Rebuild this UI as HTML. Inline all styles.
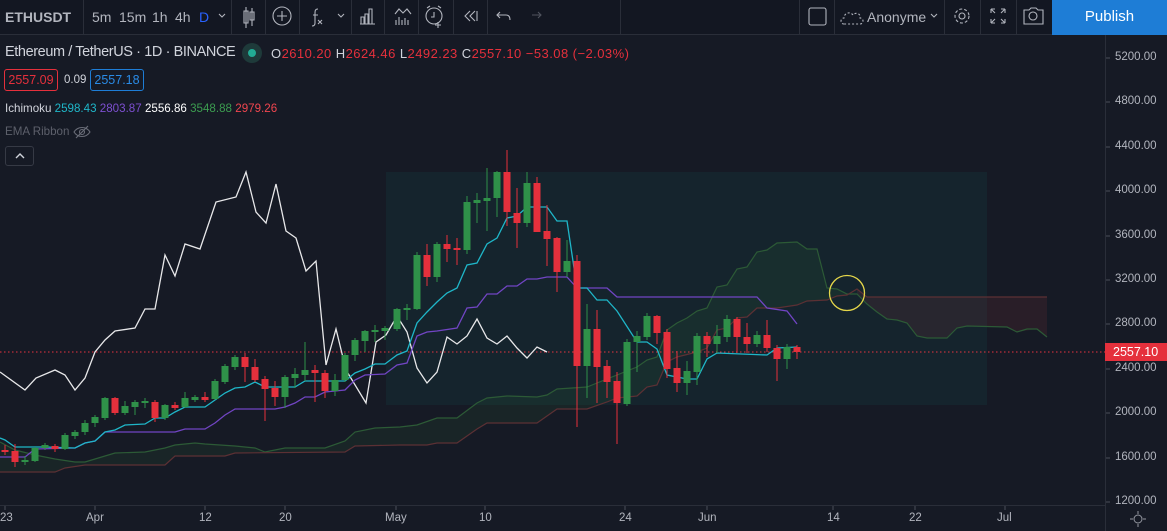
<!DOCTYPE html>
<html><head><meta charset="utf-8"><style>
*{margin:0;padding:0;box-sizing:border-box}
body{width:1167px;height:531px;overflow:hidden;background:#161a25;font-family:"Liberation Sans",sans-serif;position:relative;color:#d1d4dc}
.tb{position:absolute;left:0;top:0;width:1167px;height:35px;background:#131722;border-bottom:1px solid #2a2e39}
.t{position:absolute;top:9px;font-size:14px;color:#b2b5be}
.sep{position:absolute;top:0;width:1px;height:35px;background:#2a2e39}
.ax{position:absolute;font-size:11.5px;color:#b2b5be}
</style></head><body>
<div class="tb">
<div class="t" style="left:5px;font-weight:bold;color:#b2b5be">ETHUSDT</div>
<div class="sep" style="left:83px"></div>
<div class="t" style="left:92px">5m</div><div class="t" style="left:119px">15m</div><div class="t" style="left:152px">1h</div><div class="t" style="left:175px">4h</div><div class="t" style="left:199px;color:#2962ff">D</div>
<div class="sep" style="left:231px"></div><div class="sep" style="left:265px"></div><div class="sep" style="left:299px"></div><div class="sep" style="left:351px"></div><div class="sep" style="left:384px"></div><div class="sep" style="left:418px"></div><div class="sep" style="left:453px"></div><div class="sep" style="left:487px"></div><div class="sep" style="left:620px"></div><div class="sep" style="left:799px"></div><div class="sep" style="left:834px"></div><div class="sep" style="left:944px"></div><div class="sep" style="left:980px"></div><div class="sep" style="left:1016px"></div>
<svg width="1167" height="35" style="position:absolute;left:0;top:0" fill="none" stroke="#b2b5be" stroke-width="1.1">
<path d="M219 14l3 3 3-3"/>
<path d="M246 7v21M244 11h4v12h-4zM252 8v18M250 12h4v8h-4z"/>
<circle cx="282" cy="16" r="9"/><path d="M282 11v10M277 16h10"/>
<path d="M318 9c-3 0-3 2-3 5v9c0 2-1 3-3 3M313 15h5M318 20l4 4M322 20l-4 4"/>
<path d="M338 14l3 3 3-3"/>
<path d="M360 24h15M361 24v-7h3v7M365 24v-10h3v10M369 24v-15h3v15"/>
<path d="M395 14l4-5 4 4 4-4 4 5M396 20v5M399 17v8M402 20v5M405 18v7M408 20v5"/>
<circle cx="434" cy="16" r="8"/><path d="M434 12v5h-3M427 8l3-2M441 8l-3-2M438 22v6M435 25h6"/>
<path d="M470 11l-5 5 5 5M475 11l-5 5 5 5M477 11v10"/>
<path d="M500 12l-3 3 3 3M497 15h9c3 0 4 2 4 5"/>
<path stroke="#50535e" d="M538 12l3 3-3 3M541 15h-9"/>
<rect x="809" y="8" width="17" height="17" rx="2"/>
<path stroke-dasharray="2 2" d="M844 24c-4 0-4-6 0-6 0-5 6-7 9-3 2-3 8-2 7 3 4 0 4 6 0 6z"/>
<path d="M931 14l3 3 3-3"/>
<circle cx="962" cy="16" r="3"/><circle cx="962" cy="16" r="7" stroke-dasharray="3 2"/>
<path d="M991 9h4M991 9v4M991 9l4 4M1005 9h-4M1005 9v4M1005 9l-4 4M991 23h4M991 23v-4M991 23l4-4M1005 23h-4M1005 23v-4M1005 23l-4-4"/>
<path d="M1024 10h5l2-2h5l2 2h5v14h-19z"/><circle cx="1033" cy="16" r="4"/>
</svg>
<div class="t" style="left:867px">Anonyme</div>
<div style="position:absolute;left:1052px;top:0;width:115px;height:35px;background:#1e7dd6;color:#fff;font-size:15px;text-align:center;line-height:34px">Publish</div>
</div>

<svg width="1167" height="496" viewBox="0 35 1167 496" style="position:absolute;left:0;top:35px">
<rect x="386" y="172" width="601" height="233" fill="#15262f" opacity="0.9"/>
<polygon fill="rgba(56,142,60,0.10)" points="0,442 15,450 35,455 55,459 75,462 85,462 95,459 115,453 145,452 165,448 175,445 195,443 205,444 235,446 255,448 265,452 285,448 325,448 345,441 355,432 375,428 400,427 417,425 437,418 457,418 477,403 487,398 507,396 537,397 547,395 557,389 587,387 597,383 637,367 647,360 657,357 667,330 677,323 687,318 697,311 707,308 717,287 727,285 737,269 747,267 757,252 767,250 777,243 797,242 807,249 817,249 827,288 837,289 847,294 857,290 857,289 847,295 837,296 827,300 807,301 797,305 777,308 757,308 747,317 737,318 727,328 717,330 707,348 697,352 677,357 667,362 657,385 647,387 637,396 617,398 607,402 587,409 557,409 537,423 487,423 477,429 457,443 437,443 427,445 400,445 375,446 355,446 345,452 235,453 225,456 175,456 165,465 85,465 65,468 55,472 0,472"/>
<polygon fill="rgba(120,50,55,0.20)" points="857,289 867,297 1047,297 1047,337 1037,329 1017,332 1007,327 967,326 957,328 947,338 927,338 917,336 907,323 897,320 887,319 877,312 867,304 857,294"/>
<polyline fill="none" stroke="#2c5a36" stroke-width="1.2" points="0,442 15,450 35,455 55,459 75,462 85,462 95,459 115,453 145,452 165,448 175,445 195,443 205,444 235,446 255,448 265,452 285,448 325,448 345,441 355,432 375,428 400,427 417,425 437,418 457,418 477,403 487,398 507,396 537,397 547,395 557,389 587,387 597,383 637,367 647,360 657,357 667,330 677,323 687,318 697,311 707,308 717,287 727,285 737,269 747,267 757,252 767,250 777,243 797,242 807,249 817,249 827,288 837,289 847,294 857,294 867,304 877,312 887,319 897,320 907,323 917,336 927,338 947,338 957,328 967,326 1007,327 1017,332 1027,329 1037,329 1047,337"/>
<polyline fill="none" stroke="#5c3034" stroke-width="1.2" points="0,472 55,472 65,468 85,465 165,465 175,456 225,456 235,453 345,452 355,446 400,445 427,445 437,443 457,443 477,429 487,423 537,423 557,409 587,409 607,402 617,398 637,396 647,387 657,385 667,362 677,357 697,352 707,348 717,330 727,328 737,318 747,317 757,308 777,308 797,305 807,301 827,300 837,296 847,295 857,289 867,297 1047,297"/>
<line x1="0" y1="352" x2="1105" y2="352" stroke="#e53340" stroke-dasharray="1.5 2.5"/>
<polyline fill="none" stroke="#e8e8ea" stroke-width="1.3" points="0,372 25,390 36,378 55,370 65,375 75,390 85,378 95,352 105,340 115,331 135,328 145,309 155,309 165,255 175,276 185,244 200,249 216,202 236,197 246,172 256,212 266,223 276,184 286,231 296,238 306,271 316,261 326,365 336,329 346,370 366,403 376,342 386,335 397,316 407,332 417,368 427,383 437,372 447,337 457,344 467,336 477,319 487,338 497,344 507,336 517,348 527,358 537,347 547,352"/>
<polyline fill="none" stroke="#7145c4" stroke-width="1.3" points="0,457 25,457 35,449 75,448 85,443 95,441 105,432 175,432 185,429 205,429 215,423 225,415 235,409 275,409 285,407 295,403 305,397 315,397 325,392 345,390 355,380 365,375 385,374 397,365 407,363 417,336 427,332 437,331 457,328 467,308 477,307 487,294 497,294 507,286 517,286 527,279 537,279 547,277 567,277 577,288 607,288 617,297 757,297 767,308 787,311 797,324"/>
<polyline fill="none" stroke="#1fb6c8" stroke-width="1.3" points="0,438 5,440 15,447 35,447 45,447 75,448 85,443 95,441 105,432 115,430 125,425 145,424 155,418 165,418 175,412 185,407 205,407 215,400 225,393 235,388 245,387 255,382 265,387 295,387 305,381 345,381 355,373 365,369 375,364 385,364 397,355 407,351 417,323 427,312 437,302 447,293 457,288 467,265 477,263 487,244 497,238 507,218 517,216 527,207 547,207 557,221 567,221 577,288 587,288 597,300 607,300 617,311 637,342 647,342 657,349 667,375 687,379 697,379 707,359 717,353 767,355 777,348 797,347"/>
<g stroke="#2f9149" fill="#2f9149">
<path d="M25 456V465M35 447V462M45 443V450M65 433V450M75 430V439M85 420V435M95 415V427M105 397V420M125 401V415M135 400V415M145 398V408M165 404V420M185 392V408M195 395V402M215 379V400M225 364V384M235 355V370M285 375V408M295 368V388M305 342V381M335 374V396M345 353V382M355 338V361M365 330V352M375 325V342M385 326V340M397 308V331M407 304V320M417 252V310M437 242V282M467 196V254M477 193V223M487 168V231M497 171V217M527 172V227M567 240V277M587 304V398M627 339V406M637 331V372M647 313V340M687 361V395M697 333V385M717 325V353M727 315V342M757 331V347M787 344V369"/>
<g stroke="none"><rect x="21.5" y="460" width="7" height="2"/><rect x="31.5" y="448" width="7" height="13"/><rect x="41.5" y="445" width="7" height="3"/><rect x="61.5" y="435" width="7" height="14"/><rect x="71.5" y="432" width="7" height="4"/><rect x="81.5" y="423" width="7" height="9"/><rect x="91.5" y="417" width="7" height="6"/><rect x="101.5" y="398" width="7" height="20"/><rect x="121.5" y="406" width="7" height="7"/><rect x="131.5" y="402" width="7" height="5"/><rect x="141.5" y="401" width="7" height="2"/><rect x="161.5" y="405" width="7" height="13"/><rect x="181.5" y="398" width="7" height="9"/><rect x="191.5" y="397" width="7" height="3"/><rect x="211.5" y="381" width="7" height="18"/><rect x="221.5" y="366" width="7" height="16"/><rect x="231.5" y="357" width="7" height="10"/><rect x="281.5" y="377" width="7" height="20"/><rect x="291.5" y="374" width="7" height="4"/><rect x="301.5" y="370" width="7" height="5"/><rect x="331.5" y="380" width="7" height="11"/><rect x="341.5" y="355" width="7" height="25"/><rect x="351.5" y="340" width="7" height="15"/><rect x="361.5" y="331" width="7" height="10"/><rect x="371.5" y="330" width="7" height="2"/><rect x="381.5" y="328" width="7" height="3"/><rect x="393.5" y="309" width="7" height="20"/><rect x="403.5" y="308" width="7" height="2"/><rect x="413.5" y="255" width="7" height="54"/><rect x="433.5" y="244" width="7" height="33"/><rect x="463.5" y="202" width="7" height="48"/><rect x="473.5" y="200" width="7" height="3"/><rect x="483.5" y="198" width="7" height="3"/><rect x="493.5" y="172" width="7" height="26"/><rect x="523.5" y="183" width="7" height="40"/><rect x="563.5" y="261" width="7" height="11"/><rect x="583.5" y="329" width="7" height="37"/><rect x="623.5" y="342" width="7" height="62"/><rect x="633.5" y="336" width="7" height="6"/><rect x="643.5" y="316" width="7" height="21"/><rect x="683.5" y="371" width="7" height="12"/><rect x="693.5" y="336" width="7" height="36"/><rect x="713.5" y="336" width="7" height="8"/><rect x="723.5" y="319" width="7" height="18"/><rect x="753.5" y="335" width="7" height="9"/><rect x="783.5" y="347" width="7" height="12"/></g>
</g>
<g stroke="#e5303c" fill="#e5303c">
<path d="M5 445V455M15 444V467M55 444V452M115 397V415M155 400V422M175 402V410M205 392V402M245 353V382M255 359V382M265 376V421M275 381V406M315 365V402M325 370V398M427 244V286M447 235V262M457 238V265M507 150V226M517 188V248M537 177V232M547 205V266M557 237V292M577 255V427M597 310V403M607 360V398M617 372V444M657 315V344M667 329V378M677 351V392M707 332V357M737 317V353M747 323V353M767 320V352M777 345V381M797 345V359"/>
<g stroke="none"><rect x="1.5" y="450" width="7" height="2"/><rect x="11.5" y="451" width="7" height="11"/><rect x="51.5" y="446" width="7" height="3"/><rect x="111.5" y="398" width="7" height="15"/><rect x="151.5" y="402" width="7" height="16"/><rect x="171.5" y="405" width="7" height="3"/><rect x="201.5" y="397" width="7" height="3"/><rect x="241.5" y="357" width="7" height="10"/><rect x="251.5" y="367" width="7" height="13"/><rect x="261.5" y="379" width="7" height="10"/><rect x="271.5" y="388" width="7" height="9"/><rect x="311.5" y="370" width="7" height="3"/><rect x="321.5" y="373" width="7" height="18"/><rect x="423.5" y="255" width="7" height="22"/><rect x="443.5" y="244" width="7" height="5"/><rect x="453.5" y="248" width="7" height="2"/><rect x="503.5" y="172" width="7" height="40"/><rect x="513.5" y="213" width="7" height="10"/><rect x="533.5" y="183" width="7" height="49"/><rect x="543.5" y="231" width="7" height="8"/><rect x="553.5" y="238" width="7" height="34"/><rect x="573.5" y="261" width="7" height="105"/><rect x="593.5" y="329" width="7" height="38"/><rect x="603.5" y="366" width="7" height="16"/><rect x="613.5" y="381" width="7" height="22"/><rect x="653.5" y="316" width="7" height="17"/><rect x="663.5" y="332" width="7" height="37"/><rect x="673.5" y="368" width="7" height="15"/><rect x="703.5" y="336" width="7" height="8"/><rect x="733.5" y="319" width="7" height="18"/><rect x="743.5" y="337" width="7" height="7"/><rect x="763.5" y="335" width="7" height="13"/><rect x="773.5" y="348" width="7" height="11"/><rect x="793.5" y="347" width="7" height="5"/></g>
</g>
<circle cx="847" cy="293" r="17.5" fill="none" stroke="#e4d64a" stroke-width="1.3"/>
<line x1="1105.5" y1="35" x2="1105.5" y2="531" stroke="#2a2e39"/>
<line x1="0" y1="505.5" x2="1105" y2="505.5" stroke="#2a2e39"/>
<g stroke="#4a4e59"><path d="M1106 58h4M1106 102h4M1106 147h4M1106 191h4M1106 236h4M1106 280h4M1106 324h4M1106 369h4M1106 413h4M1106 458h4M1106 502h4M5 506v4M95 506v4M205 506v4M285 506v4M396 506v4M485 506v4M625 506v4M707 506v4M833 506v4M915 506v4M1005 506v4"/></g>
<rect x="1105" y="343" width="62" height="18" fill="#e5303c"/>
<g fill="none" stroke="#9598a1"><circle cx="1138" cy="519" r="4"/><path d="M1138 511v3M1138 524v3M1130 519h3M1143 519h3"/></g>
</svg>
<div class="ax" style="left:1115px;top:51px">5200.00</div>
<div class="ax" style="left:1115px;top:95px">4800.00</div>
<div class="ax" style="left:1115px;top:140px">4400.00</div>
<div class="ax" style="left:1115px;top:184px">4000.00</div>
<div class="ax" style="left:1115px;top:229px">3600.00</div>
<div class="ax" style="left:1115px;top:273px">3200.00</div>
<div class="ax" style="left:1115px;top:317px">2800.00</div>
<div class="ax" style="left:1115px;top:362px">2400.00</div>
<div class="ax" style="left:1115px;top:406px">2000.00</div>
<div class="ax" style="left:1115px;top:451px">1600.00</div>
<div class="ax" style="left:1115px;top:495px">1200.00</div>
<div class="ax" style="left:1113px;top:345px;color:#fff;font-size:12.5px">2557.10</div>
<div class="ax" style="left:0px;top:512px">23</div>
<div class="ax" style="left:86px;top:512px">Apr</div>
<div class="ax" style="left:199px;top:512px">12</div>
<div class="ax" style="left:279px;top:512px">20</div>
<div class="ax" style="left:385px;top:512px">May</div>
<div class="ax" style="left:479px;top:512px">10</div>
<div class="ax" style="left:619px;top:512px">24</div>
<div class="ax" style="left:698px;top:512px">Jun</div>
<div class="ax" style="left:827px;top:512px">14</div>
<div class="ax" style="left:909px;top:512px">22</div>
<div class="ax" style="left:997px;top:512px">Jul</div>

<div style="position:absolute;left:5px;top:44px;font-size:14.5px;letter-spacing:-0.4px;color:#d1d4dc;white-space:nowrap">Ethereum / TetherUS · 1D · BINANCE</div>
<div style="position:absolute;left:242px;top:43px;width:20px;height:20px;border-radius:50%;background:#1e3a3a"></div>
<div style="position:absolute;left:248px;top:49px;width:8px;height:8px;border-radius:50%;background:#22ab94"></div>
<div style="position:absolute;left:271px;top:46px;font-size:13px;letter-spacing:0.45px;color:#d1d4dc;white-space:nowrap">O<span style="color:#e5303c">2610.20</span> H<span style="color:#e5303c">2624.46</span> L<span style="color:#e5303c">2492.23</span> C<span style="color:#e5303c">2557.10 −53.08 (−2.03%)</span></div>
<div style="position:absolute;left:4px;top:69px;width:54px;height:22px;border:1px solid #e5303c;border-radius:3px;color:#e5303c;font-size:12.5px;text-align:center;line-height:20px">2557.09</div>
<div style="position:absolute;left:64px;top:74px;font-size:11.5px;color:#d1d4dc">0.09</div>
<div style="position:absolute;left:90px;top:69px;width:54px;height:22px;border:1px solid #1e7dd6;border-radius:3px;color:#2a8be6;font-size:12.5px;text-align:center;line-height:20px">2557.18</div>
<div style="position:absolute;left:5px;top:102px;font-size:11.6px;color:#d1d4dc;white-space:nowrap">Ichimoku <span style="color:#1fb6c8">2598.43</span> <span style="color:#7d4fd0">2803.87</span> <span style="color:#fff">2556.86</span> <span style="color:#3c9c50">3548.88</span> <span style="color:#f0464f">2979.26</span></div>
<div style="position:absolute;left:5px;top:125px;font-size:11.6px;color:#5d606b">EMA Ribbon</div>
<svg width="20" height="16" style="position:absolute;left:72px;top:124px" fill="none" stroke="#6a6d78" stroke-width="1.1"><path d="M2 8c4-6 12-6 16 0-4 6-12 6-16 0z"/><circle cx="10" cy="8" r="2.5"/><path d="M4 14L16 2"/></svg>
<div style="position:absolute;left:5px;top:146px;width:29px;height:20px;border:1px solid #363a45;border-radius:3px"></div>
<svg width="29" height="20" style="position:absolute;left:5px;top:146px" fill="none" stroke="#d1d4dc" stroke-width="1.4"><path d="M11 12l4-4 4 4"/></svg>
</body></html>
